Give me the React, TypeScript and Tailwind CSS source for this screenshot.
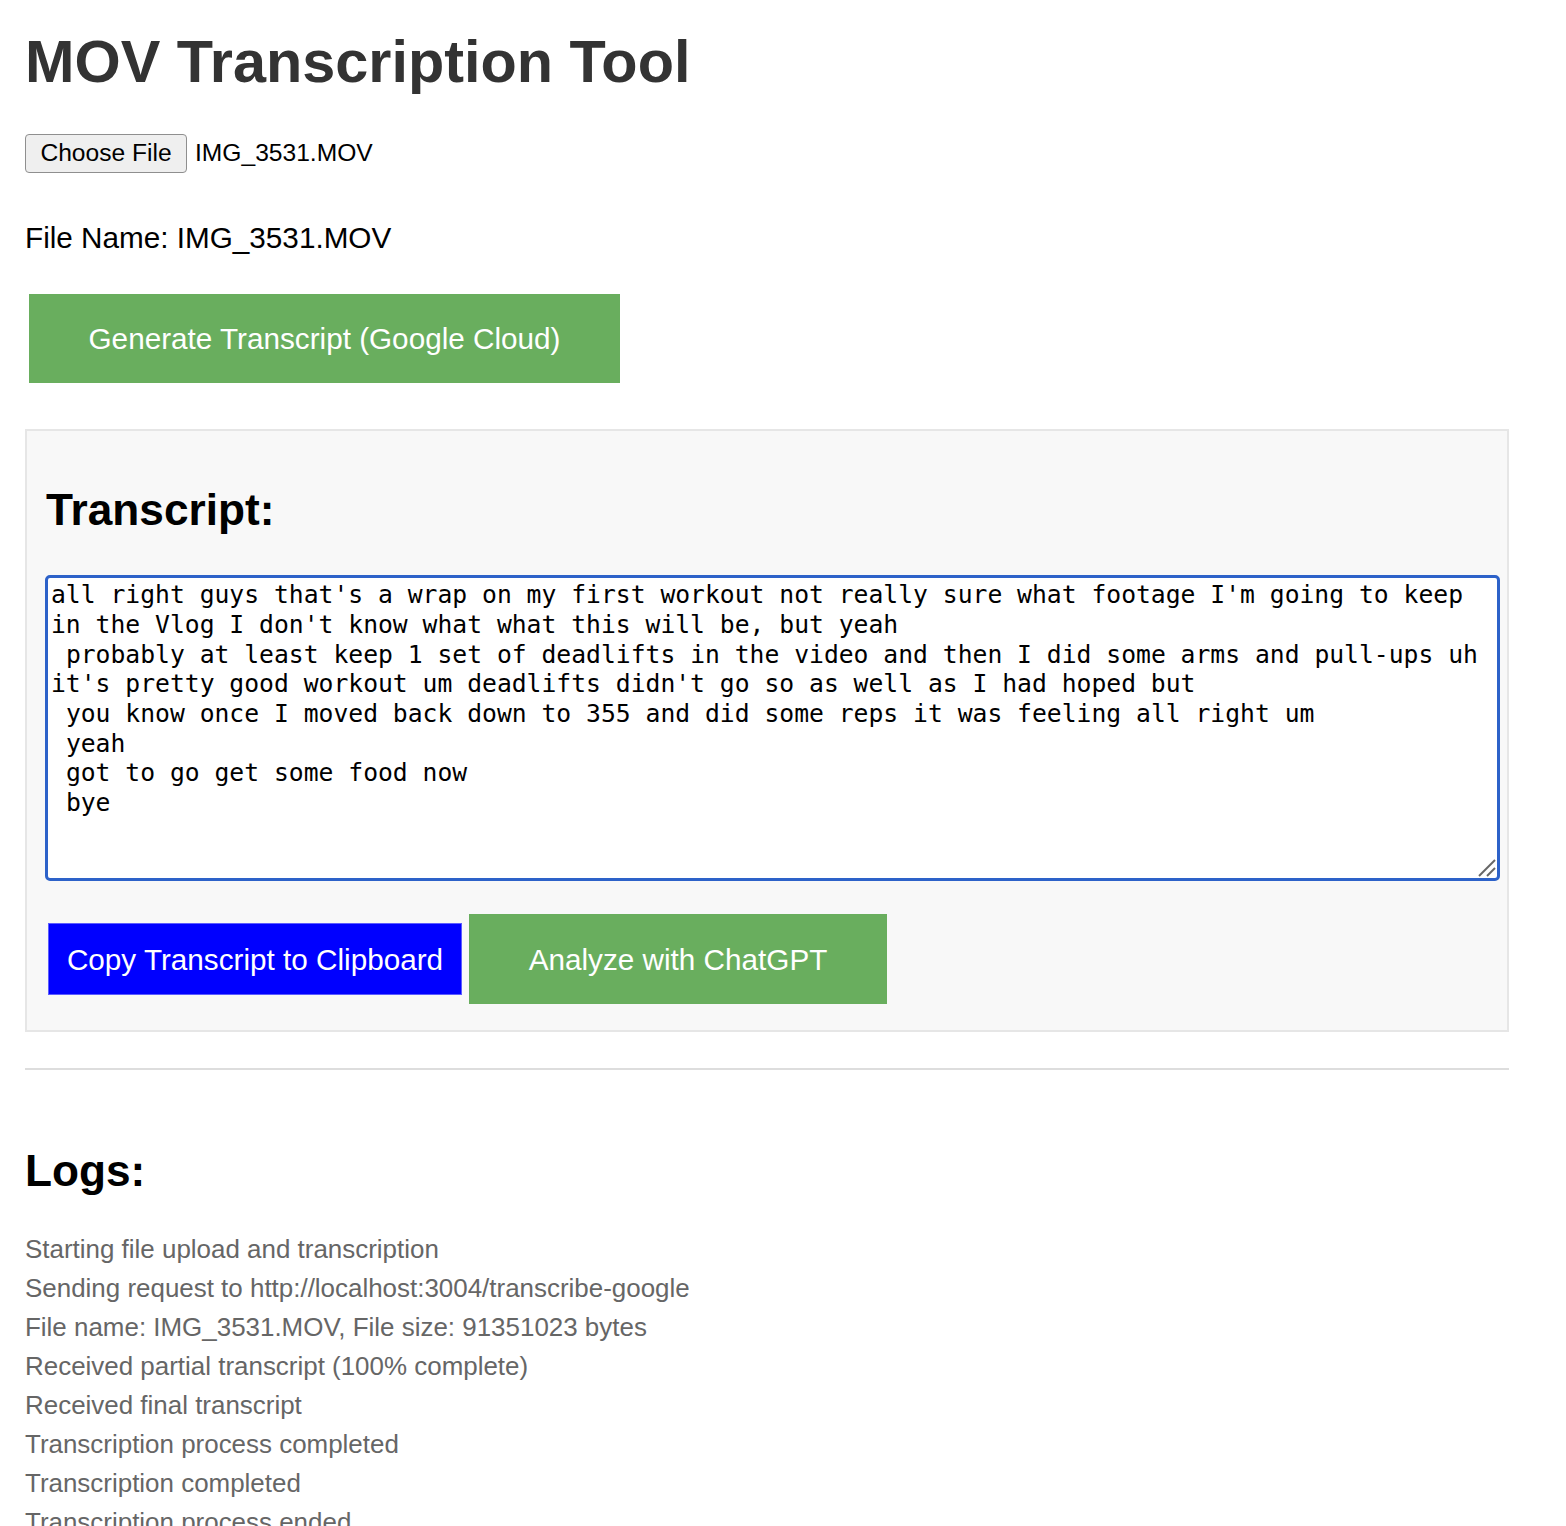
import React from 'react';

const transcript = `all right guys that's a wrap on my first workout not really sure what footage I'm going to keep in the Vlog I don't know what what this will be, but yeah
 probably at least keep 1 set of deadlifts in the video and then I did some arms and pull-ups uh it's pretty good workout um deadlifts didn't go so as well as I had hoped but
 you know once I moved back down to 355 and did some reps it was feeling all right um
 yeah
 got to go get some food now
 bye`;

const logs = [
  'Starting file upload and transcription',
  'Sending request to http://localhost:3004/transcribe-google',
  'File name: IMG_3531.MOV, File size: 91351023 bytes',
  'Received partial transcript (100% complete)',
  'Received final transcript',
  'Transcription process completed',
  'Transcription completed',
  'Transcription process ended',
];

export default function App() {
  return (
    <div className="min-h-screen bg-white pl-[25px] pt-[32px] font-['Liberation_Sans',Arial,sans-serif] text-black">
      <h1 className="text-[59.4px] leading-[59px] font-bold text-[#333333]">MOV Transcription Tool</h1>

      <div className="mt-[43px] flex items-center">
        <button className="h-[39px] w-[162px] rounded-[4px] border border-[#8f8f8f] bg-[#efefef] text-[24.6px] leading-[24.4px] text-black">
          Choose File
        </button>
        <span className="ml-[8px] text-[24.6px] leading-[24.4px]">IMG_3531.MOV</span>
      </div>

      <p className="mt-[50px] text-[29.7px] leading-[29.3px]">File Name: IMG_3531.MOV</p>

      <button className="ml-[4px] mt-[42px] flex h-[89px] w-[591px] items-center justify-center bg-[#69ae5e] text-[29.7px] leading-[29.3px] text-white">
        Generate Transcript (Google Cloud)
      </button>

      <section className="mt-[46px] h-[603px] w-[1484px] border-2 border-[#e6e6e6] bg-[#f8f8f8] pl-[18px] pt-[57px]">
        <h2 className="pl-px text-[44.2px] leading-[43.9px] font-bold">Transcript:</h2>

        <div className="relative mt-[43px] h-[306px] w-[1455px]">
          <textarea
            readOnly
            value={transcript}
            className="h-full w-full resize-none rounded-[5px] border-[3px] border-[#2d62c9] bg-white px-[3px] pt-[2px] font-['DejaVu_Sans_Mono',monospace] text-[24.7px] leading-[29.7px] text-black outline-none"
          />
          <svg className="absolute bottom-[4px] right-[4px]" width="20" height="20" viewBox="0 0 20 20">
            <line x1="3" y1="19" x2="19" y2="3" stroke="#666" strokeWidth="2" />
            <line x1="11" y1="19" x2="19" y2="11" stroke="#666" strokeWidth="2" />
          </svg>
        </div>

        <div className="mt-[33px] flex items-center">
          <button className="ml-[3px] flex h-[72px] w-[414px] items-center justify-center border border-[#5c5cff] bg-[#0000ff] text-[29.7px] leading-[29.3px] text-white">
            Copy Transcript to Clipboard
          </button>
          <button className="ml-[7px] flex h-[90px] w-[418px] items-center justify-center bg-[#69ae5e] text-[29.7px] leading-[29.3px] text-white">
            Analyze with ChatGPT
          </button>
        </div>
      </section>

      <hr className="mt-[36px] w-[1484px] border-t-2 border-[#dddddd]" />

      <h2 className="mt-[79px] text-[44.2px] leading-[43.9px] font-bold">Logs:</h2>

      <div className="mt-[37px] text-[25.95px] leading-[38.9px] text-[#666666]">
        {logs.map((l) => (
          <div key={l}>{l}</div>
        ))}
      </div>
    </div>
  );
}
